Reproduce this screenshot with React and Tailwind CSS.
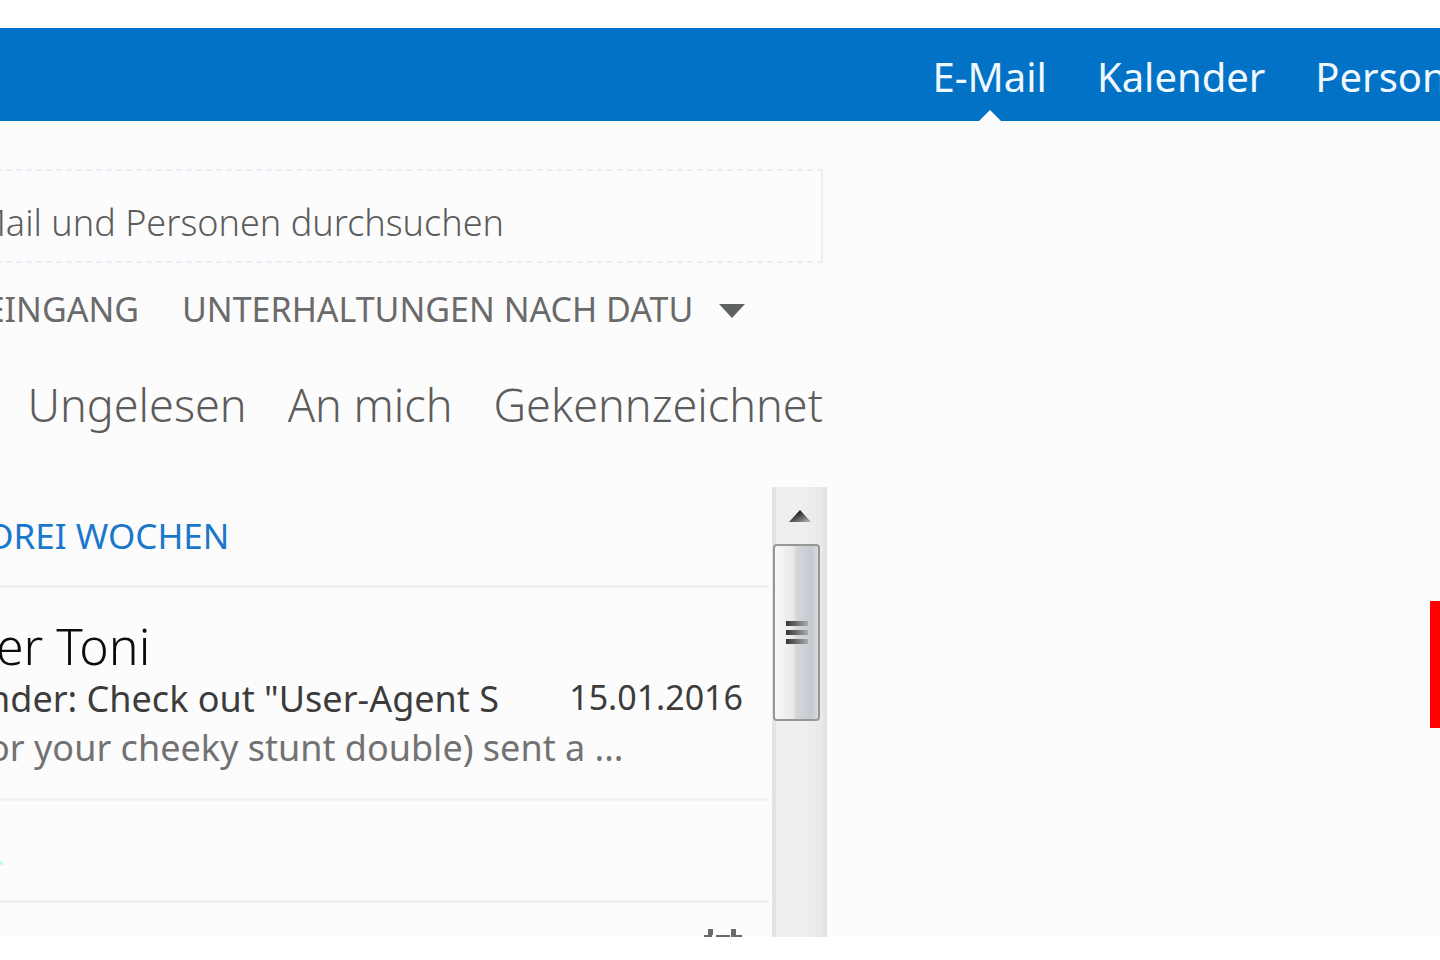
import { useState } from "react";

const navItems = ["E-Mail", "Kalender", "Personen"];
const filters = ["Ungelesen", "An mich", "Gekennzeichnet"];

function Header({ active, onSelect }) {
  return (
    <header className="flex h-[93px] shrink-0 justify-end overflow-hidden bg-[#0272c6]">
      <nav className="-mr-[54px] flex gap-[50px] text-[40px] leading-[98px] text-[#f0f8ff]">
        {navItems.map((item) => (
          <button
            key={item}
            onClick={() => onSelect(item)}
            className="relative whitespace-nowrap"
          >
            {item}
            {item === active && (
              <svg
                className="absolute bottom-0 left-1/2 h-[11px] w-[22px] -translate-x-1/2"
                viewBox="0 0 22 11"
              >
                <path d="M0 11 L11 0 L22 11 Z" fill="#fcfcfc" />
              </svg>
            )}
          </button>
        ))}
      </nav>
    </header>
  );
}

function Scrollbar() {
  return (
    <div className="flex w-[55px] shrink-0 flex-col border-x-4 border-[#e3e3e7] bg-[linear-gradient(90deg,#eeefef_55%,#e9e9eb)]">
      <button
        aria-label="Nach oben"
        className="flex h-[57px] shrink-0 items-center justify-center"
      >
        <svg className="h-3 w-6" viewBox="0 0 24 12">
          <defs>
            <linearGradient id="arrow" x1="0" y1="0" x2="1" y2="1">
              <stop offset="0.3" stopColor="#222" />
              <stop offset="1" stopColor="#bbb" />
            </linearGradient>
          </defs>
          <path d="M1 12 L12 0 L23 12 Z" fill="url(#arrow)" />
        </svg>
      </button>
      <div className="-ml-[3px] flex h-[177px] w-[47px] shrink-0 flex-col items-center justify-center gap-1 rounded-[4px] border-2 border-[#969896] bg-[linear-gradient(90deg,#f8f8f9,#e9e9ea_42%,#d5d6da_50%,#c5cad1_85%,#dadadd)]">
        <span className="h-[5px] w-[22px] bg-[linear-gradient(90deg,#333,#a9abad)]" />
        <span className="h-[5px] w-[22px] bg-[linear-gradient(90deg,#333,#a9abad)]" />
        <span className="h-[5px] w-[22px] bg-[linear-gradient(90deg,#333,#a9abad)]" />
      </div>
    </div>
  );
}

function MessageList() {
  return (
    <div className="mr-[3px] min-w-0 flex-1 overflow-hidden whitespace-nowrap">
      <h2 className="flex h-[101px] items-center border-b-3 border-[#eeefef] text-[35px] text-[#1a78cc]">
        <span className="-ml-3">DREI WOCHEN</span>
      </h2>
      <article className="h-[213px] border-b-3 border-[#f2f3f3] pt-[30px]">
        <h3 className="-ml-1 text-[50px] leading-[56px] font-light text-[#0c0c0c]">
          er Toni
        </h3>
        <div className="flex justify-between pr-[26px] text-[#3c3c3c]">
          <p className="-ml-3 text-[36px] leading-[50px]">
            nder: Check out "User-Agent S
          </p>
          <time className="text-[34px] leading-[46px]" dateTime="2016-01-15">
            15.01.2016
          </time>
        </div>
        <p className="-ml-3 text-[36px] leading-[48px] text-[#727272]">
          or your cheeky stunt double) sent a ...
        </p>
      </article>
      <div className="flex h-[102px] items-center border-b-3 border-[#eeefef] pt-6">
        <span className="h-1 w-[3px] bg-[#c4fafa]" />
      </div>
      <div className="flex justify-end pt-[25px] pr-[26px]">
        <svg className="h-10 w-10" viewBox="0 0 40 40" fill="#6a6a6a">
          <path d="M1 7h4V1h5v6h-1v3H1zM13 7h14v3H13zM28 7V1h5v6h6v3H28z" />
        </svg>
      </div>
    </div>
  );
}

export default function App() {
  const [active, setActive] = useState("E-Mail");
  const [filter, setFilter] = useState("");

  return (
    <div className="flex h-screen flex-col overflow-hidden bg-white pt-7 pb-[23px] font-['Noto_Sans',sans-serif]">
      <Header active={active} onSelect={setActive} />

      <div className="flex min-h-0 flex-1 overflow-hidden bg-[#fcfcfc]">
        <section className="flex w-[827px] shrink-0 flex-col overflow-hidden pt-12">
          <form className="-ml-16 mr-1 h-[94px] shrink-0">
            <input
              type="text"
              aria-label="E-Mail und Personen durchsuchen"
              placeholder="Mail und Personen durchsuchen"
              className="h-full w-full border-2 border-dashed border-[#e6eef8] [border-right-style:solid] pt-3 pr-[317px] text-right text-[36px] font-light outline-none placeholder:text-[#5c5c5c]"
            />
          </form>

          <div className="flex h-[92px] shrink-0 items-center justify-end pr-[82px] text-[34px] whitespace-nowrap text-[#6a6a6a]">
            <span className="mr-[43px]">EINGANG</span>
            <select
              aria-label="Sortierung"
              className="mr-[25px] shrink-0 appearance-none outline-none"
            >
              <option>UNTERHALTUNGEN NACH DATU</option>
            </select>
            <svg className="mt-1 h-[14px] w-[26px] shrink-0" viewBox="0 0 26 14">
              <path d="M0 0 H26 L13 14 Z" fill="#5f6262" />
            </svg>
          </div>

          <div className="flex h-[132px] shrink-0 justify-end gap-[41px] pt-[18px] pr-1 text-[45px] leading-[64px] font-light whitespace-nowrap text-[#5c5c5c]">
            {filters.map((f) => (
              <button
                key={f}
                aria-pressed={filter === f}
                onClick={() => setFilter(f)}
                className="h-16"
              >
                {f}
              </button>
            ))}
          </div>

          <div className="flex min-h-0 flex-1">
            <MessageList />
            <Scrollbar />
          </div>
        </section>

        <main className="flex flex-1 justify-end pt-[480px]">
          <div className="h-[127px] w-[10px] bg-[#ff0000]" />
        </main>
      </div>
    </div>
  );
}
